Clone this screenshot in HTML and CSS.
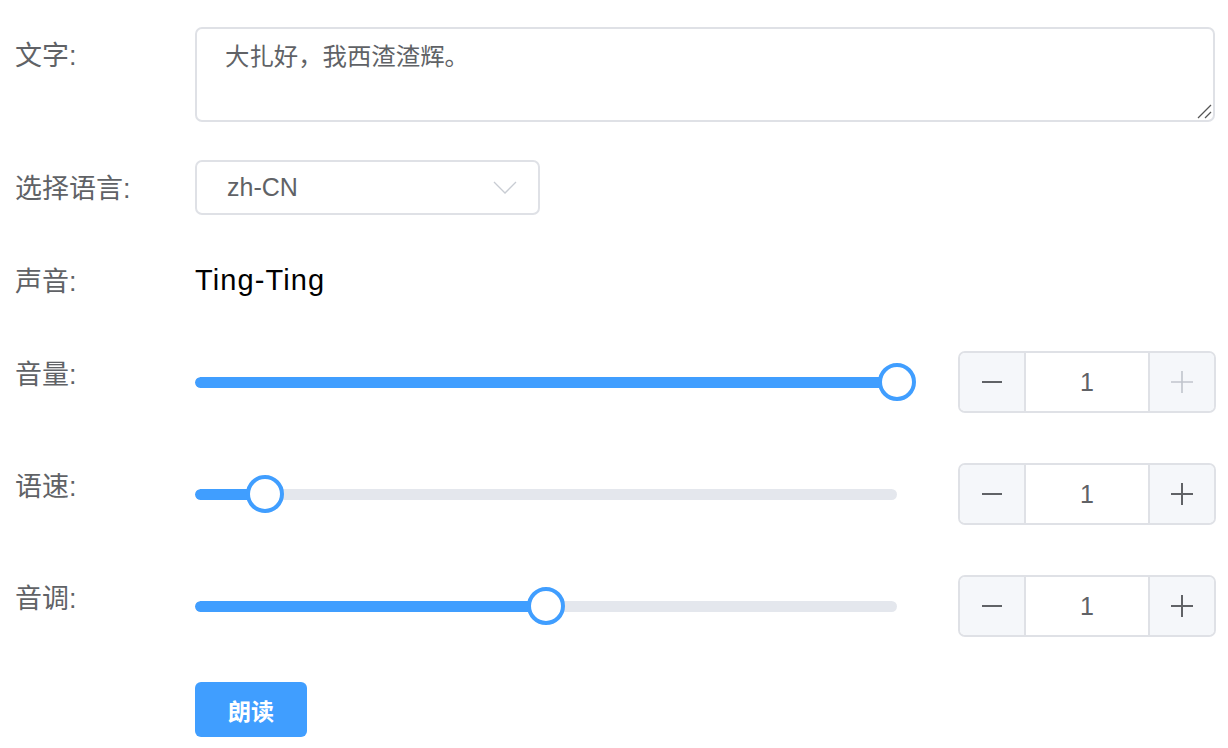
FILE: index.html
```html
<!DOCTYPE html>
<html lang="zh-CN">
<head>
<meta charset="utf-8">
<title>语音合成</title>
<link rel="stylesheet" href="styles.css">
</head>
<body>
<form class="form">
  <div class="form-item row-text">
    <label class="label">文字:</label>
    <div class="content textarea-wrap">
      <textarea class="textarea">大扎好，我西渣渣辉。</textarea>
      <svg class="resizer" width="16" height="16" viewBox="0 0 16 16"><line x1="2" y1="15" x2="15" y2="2" stroke="#555" stroke-width="1.3"/><line x1="9" y1="15" x2="15" y2="9" stroke="#555" stroke-width="1.3"/></svg>
    </div>
  </div>

  <div class="form-item row-select">
    <label class="label">选择语言:</label>
    <div class="content">
      <div class="select">
        <span class="select-value">zh-CN</span>
        <svg class="chevron" width="24" height="13" viewBox="0 0 24 13"><polyline points="1,1 12,12 23,1" fill="none" stroke="#c8ccd3" stroke-width="1.3"/></svg>
      </div>
    </div>
  </div>

  <div class="form-item row-voice">
    <label class="label">声音:</label>
    <div class="content">
      <span class="voice">Ting-Ting</span>
    </div>
  </div>

  <div class="form-item row-slider">
    <label class="label">音量:</label>
    <div class="content slider-row">
      <div class="slider">
        <div class="track"><div class="fill" style="width:100%"></div></div>
        <div class="thumb" style="left:100%"></div>
      </div>
      <div class="number">
        <span class="num-btn minus"><svg width="22" height="22" viewBox="0 0 22 22"><line x1="1" y1="11" x2="21" y2="11" stroke="#606266" stroke-width="2"/></svg></span>
        <span class="num-value">1</span>
        <span class="num-btn plus disabled"><svg width="22" height="22" viewBox="0 0 22 22"><line x1="0" y1="11" x2="22" y2="11" stroke="#c0c4cc" stroke-width="1.6"/><line x1="11" y1="0" x2="11" y2="22" stroke="#c0c4cc" stroke-width="1.6"/></svg></span>
      </div>
    </div>
  </div>

  <div class="form-item row-slider">
    <label class="label">语速:</label>
    <div class="content slider-row">
      <div class="slider">
        <div class="track"><div class="fill" style="width:10%"></div></div>
        <div class="thumb" style="left:10%"></div>
      </div>
      <div class="number">
        <span class="num-btn minus"><svg width="22" height="22" viewBox="0 0 22 22"><line x1="1" y1="11" x2="21" y2="11" stroke="#606266" stroke-width="2"/></svg></span>
        <span class="num-value">1</span>
        <span class="num-btn plus"><svg width="22" height="22" viewBox="0 0 22 22"><line x1="0" y1="11" x2="22" y2="11" stroke="#606266" stroke-width="2"/><line x1="11" y1="0" x2="11" y2="22" stroke="#606266" stroke-width="2"/></svg></span>
      </div>
    </div>
  </div>

  <div class="form-item row-slider">
    <label class="label">音调:</label>
    <div class="content slider-row">
      <div class="slider">
        <div class="track"><div class="fill" style="width:50%"></div></div>
        <div class="thumb" style="left:50%"></div>
      </div>
      <div class="number">
        <span class="num-btn minus"><svg width="22" height="22" viewBox="0 0 22 22"><line x1="1" y1="11" x2="21" y2="11" stroke="#606266" stroke-width="2"/></svg></span>
        <span class="num-value">1</span>
        <span class="num-btn plus"><svg width="22" height="22" viewBox="0 0 22 22"><line x1="0" y1="11" x2="22" y2="11" stroke="#606266" stroke-width="2"/><line x1="11" y1="0" x2="11" y2="22" stroke="#606266" stroke-width="2"/></svg></span>
      </div>
    </div>
  </div>

  <div class="form-item row-button">
    <span class="label"></span>
    <div class="content">
      <button type="button" class="btn">朗读</button>
    </div>
  </div>
</form>
</body>
</html>
```

FILE: styles.css
```css
html, body {
  margin: 0;
  background: #fff;
}
body {
  padding: 27px 13px 0 15px;
  font-family: "Liberation Sans", "Noto Sans CJK SC", sans-serif;
  color: #606266;
}
.form {
  margin: 0;
}
.form-item {
  display: flex;
  align-items: flex-start;
  margin-bottom: 38px;
}
.row-slider {
  margin-bottom: 40px;
}
.label {
  flex: none;
  width: 180px;
  height: 55px;
  font-size: 27px;
  line-height: 58px;
  color: #606266;
}
.content {
  flex: 1;
  min-width: 0;
}

/* textarea */
.textarea-wrap {
  position: relative;
}
.textarea {
  display: block;
  box-sizing: border-box;
  width: 100%;
  height: 95px;
  padding: 10px 28px;
  border: 2px solid #dfe1e6;
  border-radius: 7px;
  font-family: "Liberation Sans", "Noto Sans CJK SC", sans-serif;
  font-size: 24.4px;
  line-height: 36px;
  color: #606266;
  resize: none;
  outline: none;
  background: #fff;
}
.resizer {
  position: absolute;
  right: 3px;
  bottom: 3px;
  display: block;
}

/* select */
.select {
  box-sizing: border-box;
  width: 345px;
  height: 55px;
  border: 2px solid #dfe1e6;
  border-radius: 7px;
  display: flex;
  align-items: center;
  justify-content: space-between;
  padding: 0 21px 0 30px;
}
.select-value {
  font-size: 25px;
  color: #606266;
}
.chevron {
  display: block;
}

/* voice */
.row-voice .content {
  height: 55px;
  display: flex;
  align-items: center;
}
.voice {
  font-size: 29px;
  letter-spacing: 1.1px;
  color: #000;
}

/* sliders */
.slider-row {
  display: flex;
  align-items: center;
  height: 72px;
  gap: 61px;
}
.slider {
  position: relative;
  flex: none;
  width: 702px;
  height: 11px;
}
.track {
  height: 11px;
  border-radius: 6px;
  background: #e4e7ed;
  overflow: hidden;
}
.fill {
  height: 100%;
  background: #409eff;
  border-radius: 6px;
}
.thumb {
  position: absolute;
  top: 50%;
  width: 38px;
  height: 38px;
  box-sizing: border-box;
  border: 4px solid #409eff;
  border-radius: 50%;
  background: #fff;
  transform: translate(-50%, -50%);
}

/* input number */
.number {
  flex: none;
  box-sizing: border-box;
  width: 258px;
  height: 62px;
  border: 2px solid #dfe1e6;
  border-radius: 7px;
  display: flex;
  overflow: hidden;
}
.num-btn {
  flex: none;
  width: 64px;
  background: #f5f7fa;
  display: flex;
  align-items: center;
  justify-content: center;
}
.num-btn svg {
  display: block;
}
.minus {
  border-right: 2px solid #dfe1e6;
}
.plus {
  border-left: 2px solid #dfe1e6;
}
.num-value {
  flex: 1;
  display: flex;
  align-items: center;
  justify-content: center;
  font-size: 25px;
  color: #606266;
}

/* button */
.btn {
  display: block;
  width: 112px;
  height: 55px;
  border: none;
  border-radius: 6px;
  background: #409eff;
  color: #fff;
  font-family: "Liberation Sans", "Noto Sans CJK SC", sans-serif;
  font-size: 23px;
  font-weight: bold;
  padding: 0;
  cursor: pointer;
}
```
